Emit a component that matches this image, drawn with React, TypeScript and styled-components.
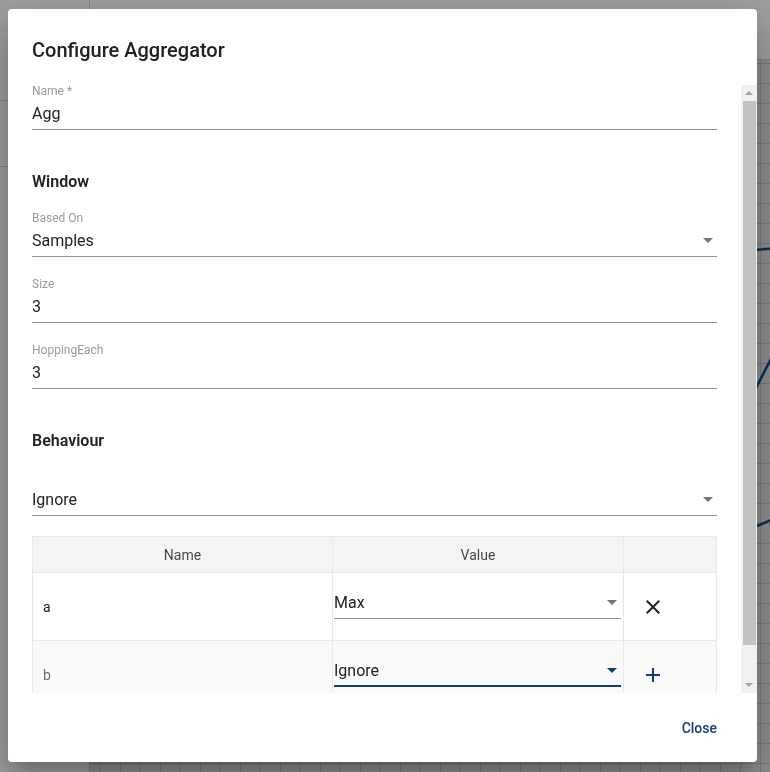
import styled, { createGlobalStyle } from "styled-components";

const GlobalStyle = createGlobalStyle`
  *, *::before, *::after { box-sizing: border-box; }
  html, body { margin: 0; padding: 0; height: 100%; }
  body {
    font-family: Roboto, "Liberation Sans", Arial, sans-serif;
    background: #fff;
    overflow: hidden;
  }
  #root { height: 100%; }
`;

/* ---- page behind the dialog ---- */

const Page = styled.div`
  display: flex;
  height: 100vh;
`;

const Sidebar = styled.nav`
  width: 90px;
  flex-shrink: 0;
  background: #fff;
  border-right: 1px solid #d4d4d4;
  display: flex;
  flex-direction: column;
`;

const SideBlock = styled.div<{ $h: number }>`
  height: ${(p) => p.$h}px;
  border-bottom: 1px solid #d4d4d4;
`;

const Main = styled.div`
  flex: 1;
  min-width: 0;
  display: flex;
  flex-direction: column;
`;

const TopBar = styled.header`
  height: 60px;
  flex-shrink: 0;
  background: #fff;
  border-bottom: 1px solid #d4d4d4;
`;

const ChartArea = styled.div`
  flex: 1;
  background-color: #e6e6e6;
  background-image: linear-gradient(to right, #c4c4c4 1px, transparent 1px),
    linear-gradient(to bottom, #c4c4c4 1px, transparent 1px);
  background-size: 20px 20px;
  background-position: 10px 3px;
  svg {
    display: block;
    width: 100%;
    height: 100%;
  }
`;

/* ---- dialog ---- */

const Backdrop = styled.div`
  position: fixed;
  inset: 0;
  background: rgba(0, 0, 0, 0.38);
  display: flex;
  padding: 9px 13px 10px 8px;
`;

const Dialog = styled.section`
  flex: 1;
  display: flex;
  flex-direction: column;
  background: #fff;
  border-radius: 4px;
  overflow: hidden;
  color: rgba(0, 0, 0, 0.87);
  box-shadow: 0px 11px 15px -7px rgba(0, 0, 0, 0.2),
    0px 24px 38px 3px rgba(0, 0, 0, 0.14), 0px 9px 46px 8px rgba(0, 0, 0, 0.12);
`;

const Title = styled.h2`
  margin: 0;
  padding: 25px 24px 19px;
  font-size: 20px;
  line-height: 32px;
  font-weight: 500;
  color: #212121;
`;

const Body = styled.div`
  flex: 1;
  min-height: 0;
  display: flex;
`;

const Content = styled.div`
  flex: 1;
  min-width: 0;
  display: flex;
  flex-direction: column;
  overflow-y: auto;
  scrollbar-width: none;
  padding: 0 24px 21px;
`;

const ScrollRail = styled.div`
  width: 16px;
  flex-shrink: 0;
  display: flex;
  flex-direction: column;
  background: #f1f1f1;
`;

const RailButton = styled.div`
  height: 16px;
  flex-shrink: 0;
  display: flex;
  align-items: center;
  justify-content: center;
  svg {
    width: 8px;
    height: 4px;
    fill: #a3a3a3;
  }
`;

const RailTrack = styled.div`
  flex: 1;
  display: flex;
  flex-direction: column;
  padding: 0 1px 32px 2px;
`;

const RailThumb = styled.div`
  flex: 1;
  background: #c1c1c1;
`;

const SectionTitle = styled.h3`
  margin: 19px 0 18px;
  font-size: 16px;
  line-height: 24px;
  font-weight: 600;
  color: #212121;
`;

const Field = styled.div`
  flex-shrink: 0;
  margin-bottom: 21px;
`;

const FieldLabel = styled.label`
  display: block;
  height: 12px;
  font-size: 12px;
  line-height: 12px;
  color: #9a9a9a;
`;

const InputBox = styled.div<{ $focused?: boolean }>`
  position: relative;
  display: flex;
  align-items: center;
  padding: 7px 0 6px;
  font-size: 16px;
  line-height: 19px;
  color: #222;
  border-bottom: 1px solid rgba(0, 0, 0, 0.42);
  ${(p) =>
    p.$focused &&
    `
    &::after {
      content: "";
      position: absolute;
      left: 0;
      right: 0;
      bottom: -1px;
      height: 2px;
      background: #0f3f73;
    }
  `}
`;

const Value = styled.span`
  flex: 1;
  min-width: 0;
`;

const Caret = styled.svg<{ $active?: boolean }>`
  width: 10px;
  height: 5px;
  margin-right: 4px;
  flex-shrink: 0;
  fill: ${(p) => (p.$active ? "#0f3f73" : "#757575")};
`;

const Table = styled.table`
  width: 100%;
  flex-shrink: 0;
  border-collapse: collapse;
  table-layout: fixed;
  margin-top: -1px;
  font-size: 14px;
`;

const HeadCell = styled.th`
  height: 36px;
  padding: 0;
  background: #f4f4f4;
  border: 1px solid #e9e9e9;
  font-weight: 400;
  color: rgba(0, 0, 0, 0.72);
  text-align: center;
`;

const Row = styled.tr<{ $shaded?: boolean }>`
  background: ${(p) => (p.$shaded ? "#fafafa" : "#fff")};
`;

const NameCell = styled.td<{ $muted?: boolean }>`
  border: 1px solid #e9e9e9;
  padding: 0 10px;
  color: ${(p) => (p.$muted ? "#6b6b6b" : "#222")};
`;

const ValueCell = styled.td`
  border: 1px solid #e9e9e9;
  padding: 13px 2px 21px 1px;
`;

const ActionCell = styled.td`
  border: 1px solid #e9e9e9;
  padding: 0 0 0 5px;
`;

const IconButton = styled.button<{ $color: string }>`
  width: 48px;
  height: 48px;
  display: flex;
  align-items: center;
  justify-content: center;
  border: 0;
  padding: 0;
  background: none;
  border-radius: 50%;
  color: ${(p) => p.$color};
  cursor: pointer;
  svg {
    width: 24px;
    height: 24px;
    fill: currentColor;
  }
`;

const Actions = styled.div`
  height: 69px;
  flex-shrink: 0;
  display: flex;
  align-items: center;
  justify-content: flex-end;
  padding-right: 32px;
`;

const TextButton = styled.button`
  border: 0;
  background: none;
  padding: 6px 8px;
  font-family: Roboto, "Liberation Sans", Arial, sans-serif;
  font-size: 14px;
  line-height: 20px;
  font-weight: 500;
  color: #0f3f73;
  cursor: pointer;
`;

function ArrowDown({ active }: { active?: boolean }) {
  return (
    <Caret $active={active} viewBox="0 0 10 5">
      <path d="M0 0h10L5 5z" />
    </Caret>
  );
}

function TextField({ label, value }: { label: string; value: string }) {
  return (
    <Field>
      <FieldLabel>{label}</FieldLabel>
      <InputBox>
        <Value>{value}</Value>
      </InputBox>
    </Field>
  );
}

function SelectField({ label, value }: { label?: string; value: string }) {
  return (
    <Field>
      <FieldLabel>{label}</FieldLabel>
      <InputBox>
        <Value>{value}</Value>
        <ArrowDown />
      </InputBox>
    </Field>
  );
}

const rows = [
  { name: "a", value: "Max", added: false },
  { name: "b", value: "Ignore", added: true },
];

export default function App() {
  return (
    <>
      <GlobalStyle />
      <Page>
        <Sidebar>
          <SideBlock $h={101} />
          <SideBlock $h={66} />
        </Sidebar>
        <Main>
          <TopBar />
          <ChartArea>
            <svg viewBox="0 0 680 712" preserveAspectRatio="none">
              <g fill="none" stroke="#0f4c8a" strokeWidth="2.5">
                <polyline points="0,420 120,330 250,360 400,240 550,270 640,192 700,187" />
                <polyline points="0,600 150,520 300,560 450,430 600,470 667,326 700,262" />
                <polyline points="0,660 200,610 400,630 600,500 667,466 700,452" />
              </g>
            </svg>
          </ChartArea>
        </Main>
      </Page>

      <Backdrop>
        <Dialog>
          <Title>Configure Aggregator</Title>
          <Body>
            <Content>
              <TextField label="Name *" value="Agg" />

              <SectionTitle>Window</SectionTitle>
              <SelectField label="Based On" value="Samples" />
              <TextField label="Size" value="3" />
              <TextField label="HoppingEach" value="3" />

              <SectionTitle>Behaviour</SectionTitle>
              <SelectField value="Ignore" />

              <Table>
                <colgroup>
                  <col style={{ width: 300 }} />
                  <col style={{ width: 291 }} />
                  <col />
                </colgroup>
                <thead>
                  <tr>
                    <HeadCell>Name</HeadCell>
                    <HeadCell>Value</HeadCell>
                    <HeadCell />
                  </tr>
                </thead>
                <tbody>
                  {rows.map((r) => (
                    <Row key={r.name} $shaded={r.added}>
                      <NameCell $muted={r.added}>{r.name}</NameCell>
                      <ValueCell>
                        <InputBox $focused={r.added}>
                          <Value>{r.value}</Value>
                          <ArrowDown active={r.added} />
                        </InputBox>
                      </ValueCell>
                      <ActionCell>
                        {r.added ? (
                          <IconButton $color="#0f3f73" aria-label="add">
                            <svg viewBox="0 0 24 24">
                              <path d="M19 13h-6v6h-2v-6H5v-2h6V5h2v6h6v2z" />
                            </svg>
                          </IconButton>
                        ) : (
                          <IconButton $color="#222" aria-label="remove">
                            <svg viewBox="0 0 24 24">
                              <path d="M19 6.41 17.59 5 12 10.59 6.41 5 5 6.41 10.59 12 5 17.59 6.41 19 12 13.41 17.59 19 19 17.59 13.41 12z" />
                            </svg>
                          </IconButton>
                        )}
                      </ActionCell>
                    </Row>
                  ))}
                </tbody>
              </Table>
            </Content>
            <ScrollRail aria-hidden>
              <RailButton>
                <svg viewBox="0 0 8 4">
                  <path d="M0 4L4 0L8 4z" />
                </svg>
              </RailButton>
              <RailTrack>
                <RailThumb />
              </RailTrack>
              <RailButton>
                <svg viewBox="0 0 8 4">
                  <path d="M0 0h8L4 4z" />
                </svg>
              </RailButton>
            </ScrollRail>
          </Body>
          <Actions>
            <TextButton>Close</TextButton>
          </Actions>
        </Dialog>
      </Backdrop>
    </>
  );
}
